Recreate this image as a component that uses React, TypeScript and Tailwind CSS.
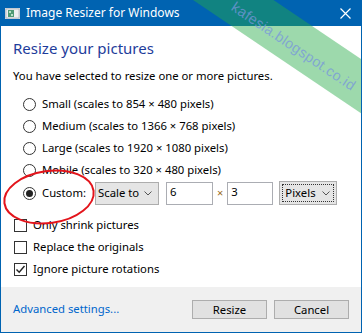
import React from "react";

const font = { fontFamily: '"Segoe UI", "Noto Sans", "Liberation Sans", sans-serif' };

function Radio({ checked }: { checked?: boolean }) {
  return (
    <span className="relative flex h-[13px] w-[13px] shrink-0 items-center justify-center rounded-full border border-[#333] bg-white">
      {checked && <span className="h-[7px] w-[7px] rounded-full bg-[#222]" />}
    </span>
  );
}

function Check({ checked }: { checked?: boolean }) {
  return (
    <span className="flex h-[13px] w-[13px] shrink-0 items-center justify-center border border-[#333] bg-white">
      {checked && (
        <svg width="11" height="11" viewBox="0 0 11 11">
          <path d="M1.5 5.5 L4.2 8.3 L9.5 2" fill="none" stroke="#222" strokeWidth="1.4" />
        </svg>
      )}
    </span>
  );
}

function Chevron() {
  return (
    <svg width="8" height="5" viewBox="0 0 8 5" className="shrink-0">
      <path d="M0.5 0.5 L4 4 L7.5 0.5" fill="none" stroke="#555" strokeWidth="1" />
    </svg>
  );
}

const sizes = [
  "Small (scales to 854 × 480 pixels)",
  "Medium (scales to 1366 × 768 pixels)",
  "Large (scales to 1920 × 1080 pixels)",
  "Mobile (scales to 320 × 480 pixels)",
];

export default function App() {
  return (
    <div
      className="relative flex h-[333px] w-[362px] flex-col overflow-hidden border-x border-b border-[#0063b1] bg-white text-[11.3px] text-black"
      style={font}
    >
      {/* title bar */}
      <div className="flex h-[26px] shrink-0 items-center bg-[#0063b1] pl-[4px] pr-[10px] text-white">
        <svg width="15" height="11" viewBox="0 0 15 11" className="shrink-0">
          <rect x="0" y="0" width="15" height="11" fill="#d6dbe0" />
          <rect x="1" y="1" width="13" height="9" fill="#eef0f2" stroke="#9aa4ad" strokeWidth="0.6" />
          <rect x="3" y="2" width="6" height="7" fill="#4f9a76" />
          <rect x="4" y="3" width="2" height="2" fill="#b8e0c8" />
          <rect x="6" y="6" width="2" height="2" fill="#b8e0c8" />
        </svg>
        <span className="ml-[6px] text-[12px]">Image Resizer for Windows</span>
        <svg width="11" height="11" viewBox="0 0 11 11" className="ml-auto">
          <path d="M0.5 0.5 L10.5 10.5 M10.5 0.5 L0.5 10.5" stroke="#fff" strokeWidth="1.2" />
        </svg>
      </div>

      {/* body */}
      <div className="flex flex-col px-[12px] pt-[11px]">
        <h1 className="text-[15px] leading-[22px] text-[#1e3c9b]">Resize your pictures</h1>
        <p className="mt-[9px] leading-[16px]">You have selected to resize one or more pictures.</p>

        <div className="mt-[9px] flex flex-col pl-[10px]">
          {sizes.map((s) => (
            <div key={s} className="flex h-[22px] items-center gap-[6px]">
              <Radio />
              <span>{s}</span>
            </div>
          ))}
          <div className="flex h-[24px] items-center">
            <Radio checked />
            <span className="ml-[6px]">Custom:</span>
            <div className="ml-[9px] flex h-[23px] w-[64px] items-center justify-between border border-[#adadad] bg-[#e5e5e5] pl-[2px] pr-[6px]">
              <span>Scale to</span>
              <Chevron />
            </div>
            <div className="ml-[7px] h-[23px] w-[47px] border border-[#abadb3] pl-[3px] leading-[18px]">6</div>
            <span className="mx-[4px] text-[11px] text-[#9a6a1a]">×</span>
            <div className="h-[23px] w-[46px] border border-[#abadb3] pl-[3px] leading-[18px]">3</div>
            <div className="ml-[6px] flex h-[24px] w-[58px] items-center border border-[#adadad] bg-[#e5e5e5] p-[2px]">
              <div className="flex h-full w-full items-center justify-between border border-dotted border-[#333] pl-[2px] pr-[3px]">
                <span>Pixels</span>
                <Chevron />
              </div>
            </div>
          </div>
        </div>

        <div className="mt-[9px] flex flex-col">
          {[
            ["Only shrink pictures", false],
            ["Replace the originals", false],
            ["Ignore picture rotations", true],
          ].map(([t, c]) => (
            <div key={t as string} className="flex h-[22px] items-center gap-[6px] pl-[1px]">
              <Check checked={c as boolean} />
              <span>{t as string}</span>
            </div>
          ))}
        </div>
      </div>

      {/* footer */}
      <div className="mt-auto flex h-[45px] shrink-0 items-center bg-[#f0f0f0] pl-[12px] pr-[12px]">
        <span className="text-[#0066cc]">Advanced settings...</span>
        <button className="ml-auto h-[19px] w-[75px] border border-[#adadad] bg-[#e1e1e1] leading-[16px]">Resize</button>
        <button className="ml-[7px] h-[19px] w-[75px] border border-[#adadad] bg-[#e1e1e1] leading-[16px]">Cancel</button>
      </div>

      {/* watermark band */}
      <div className="pointer-events-none absolute left-[-17px] top-[-22px] flex h-[45px] w-[500px] rotate-[34deg] items-center justify-center bg-[rgba(38,170,70,0.45)]">
        <span className="ml-[150px] translate-y-[5px] text-[14.5px] tracking-[0.3px] text-[rgba(120,150,220,0.75)]" style={{ fontFamily: '"Liberation Sans", sans-serif' }}>
          kafesia.blogspot.co.id
        </span>
      </div>

      {/* red annotation ellipse */}
      <svg className="pointer-events-none absolute left-0 top-[166px]" width="100" height="64" viewBox="0 0 100 64">
        <ellipse cx="48" cy="31" rx="45" ry="26" transform="rotate(-8 48 31)" fill="none" stroke="#e3141b" strokeWidth="2" />
      </svg>
    </div>
  );
}
